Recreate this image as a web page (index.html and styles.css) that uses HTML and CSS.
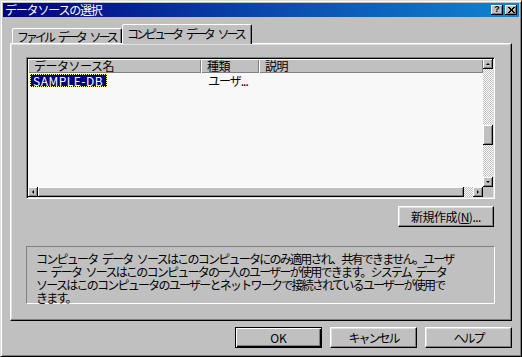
FILE: index.html
```html
<!DOCTYPE html>
<html lang="ja">
<head>
    <meta charset="UTF-8">
    <meta name="viewport" content="width=device-width, initial-scale=1.0">
    <title>データソースの選択</title>
    <link rel="stylesheet" href="styles.css">
</head>
<body>
    <div class="window">
        <div class="titlebar">
            <span class="title">データソースの選択</span>
            <div class="title-buttons">
                <div class="cap-btn help">?</div>
                <div class="cap-btn">
                    <svg viewBox="0 0 7 6" width="7" height="6" shape-rendering="crispEdges">
                        <path d="M0 0h2v1h-2zM5 0h2v1h-2zM1 1h2v1h-2zM4 1h2v1h-2zM2 2h3v2h-3zM1 4h2v1h-2zM4 4h2v1h-2zM0 5h2v1h-2zM5 5h2v1h-2z" fill="#000"/>
                    </svg>
                </div>
            </div>
        </div>

        <div class="tabs">
            <div class="tab">ファイル データ ソース</div>
            <div class="tab active">コンピュータ データ ソース</div>
        </div>

        <div class="panel">
            <div class="listview">
                <div class="list-body">
                    <div class="list-header">
                        <div class="col col-name">データソース名</div>
                        <div class="col col-type">種類</div>
                        <div class="col col-desc">説明</div>
                    </div>
                    <div class="list-row">
                        <div class="cell col-name"><span class="selected">SAMPLE-DB</span></div>
                        <div class="cell col-type">ユーザ...</div>
                    </div>
                </div>
                <div class="vscroll">
                    <div class="sb-btn"><span class="arrow up"></span></div>
                    <div class="sb-track"><div class="sb-thumb v"></div></div>
                    <div class="sb-btn"><span class="arrow down"></span></div>
                </div>
                <div class="hscroll">
                    <div class="sb-btn"><span class="arrow left"></span></div>
                    <div class="sb-thumb h"></div>
                    <div class="sb-track"></div>
                    <div class="sb-btn"><span class="arrow right"></span></div>
                </div>
                <div class="sb-corner"></div>
            </div>

            <div class="new-row">
                <div class="btn new-btn">新規作成(<u>N</u>)...</div>
            </div>

            <div class="desc">
                コンピュータ&ensp;データ&ensp;ソースはこのコンピュータにのみ適用され、共有できません。ユーザ<br>
                ー&ensp;データ&ensp;ソースはこのコンピュータの一人のユーザーが使用できます。システム&ensp;データ<br>
                ソースはこのコンピュータのユーザーとネットワークで接続されているユーザーが使用で<br>
                きます。
            </div>
        </div>

        <div class="footer">
            <div class="btn default">OK</div>
            <div class="btn kana">キャンセル</div>
            <div class="btn kana">ヘルプ</div>
        </div>
    </div>
</body>
</html>
```

FILE: styles.css
```css
* {
    margin: 0;
    padding: 0;
    box-sizing: border-box;
}

body {
    font-family: "Noto Sans CJK JP", "Noto Sans", sans-serif;
    font-size: 12px;
    color: #000;
    background: #c0c0c0;
    overflow: hidden;
}

.window {
    width: 522px;
    height: 357px;
    background: #c0c0c0;
    border: 1px solid;
    border-color: #dfdfdf #000 #000 #dfdfdf;
    box-shadow: inset 1px 1px #fff, inset -1px -1px #808080;
    padding: 2px;
    display: flex;
    flex-direction: column;
}

/* caption */
.titlebar {
    height: 14px;
    background: linear-gradient(90deg, #000080 0%, #0a4eb0 55%, #1084d0 100%);
    display: flex;
    align-items: center;
    justify-content: space-between;
    padding: 0 2px;
}

.title {
    color: #fff;
    line-height: 14px;
    letter-spacing: -1.2px;
}

.title-buttons {
    display: flex;
    gap: 2px;
}

.cap-btn {
    width: 12px;
    height: 10px;
    background: #c0c0c0;
    box-shadow: inset -1px -1px #000, inset 1px 1px #fff, inset -2px -2px #808080;
    display: flex;
    align-items: center;
    justify-content: center;
    padding-bottom: 1px;
}

.cap-btn.help {
    font-family: "Liberation Sans", sans-serif;
    font-weight: bold;
    font-size: 9px;
    line-height: 9px;
}

/* tabs */
.tabs {
    height: 26px;
    display: flex;
    align-items: flex-end;
    padding-left: 9px;
}

.tab {
    width: 110px;
    height: 15px;
    border: 1px solid;
    border-bottom: none;
    border-color: #fff #000 transparent #fff;
    border-radius: 2px 2px 0 0;
    box-shadow: inset -1px 0 #808080;
    padding: 1px 0 0 4px;
    line-height: 13px;
    letter-spacing: -3px;
    word-spacing: 5px;
    white-space: nowrap;
}

.tab.active {
    width: 130px;
    height: 20px;
    margin-bottom: -1px;
    padding-top: 2px;
    background: #c0c0c0;
    position: relative;
    z-index: 1;
}

/* page */
.panel {
    height: 278px;
    margin: 0 7px;
    border: 1px solid;
    border-color: #fff #000 #000 #fff;
    box-shadow: inset -1px -1px #808080, inset 1px 1px #dfdfdf;
    padding: 13px 0 0 15px;
    display: flex;
    flex-direction: column;
}

.listview {
    width: 469px;
    height: 142px;
    border: 1px solid;
    border-color: #808080 #fff #fff #808080;
    box-shadow: inset 1px 1px #000, inset -1px -1px #dfdfdf;
    padding: 1px;
    background: #f8f8f8;
    display: grid;
    grid-template-columns: 1fr 10px;
    grid-template-rows: 1fr 10px;
}

.list-header {
    display: flex;
    height: 14px;
    background: #c0c0c0;
}

.col {
    padding-left: 6px;
    line-height: 14px;
    letter-spacing: -0.5px;
    box-shadow: inset 1px 1px #fff, inset -1px -1px #808080;
    white-space: nowrap;
}

.col-name {
    width: 173px;
}

.col-type {
    width: 58px;
}

.col-desc {
    flex: 1;
}

.list-row {
    display: flex;
    height: 13px;
    margin-top: 1px;
}

.cell {
    line-height: 11px;
}

.cell.col-name {
    padding-left: 2px;
}

.cell.col-type {
    padding-left: 7px;
    line-height: 13px;
    letter-spacing: -1px;
}

.selected {
    display: inline-block;
    height: 13px;
    background: #000080;
    color: #fff;
    border: 1px dotted #ffff80;
    padding: 0 3px 0 2px;
    letter-spacing: 0.5px;
}

/* scrollbars */
.vscroll {
    display: flex;
    flex-direction: column;
}

.hscroll {
    display: flex;
}

.sb-btn {
    flex: 0 0 10px;
    height: 10px;
    background: #c0c0c0;
    box-shadow: inset -1px -1px #000, inset 1px 1px #fff, inset -2px -2px #808080;
    display: flex;
    align-items: center;
    justify-content: center;
    padding: 0 1px 1px 0;
}

.sb-track {
    flex: 1;
    background: repeating-conic-gradient(#fff 0 25%, #c0c0c0 0 50%) 0 0 / 2px 2px;
}

.sb-thumb {
    background: #c0c0c0;
    box-shadow: inset -1px -1px #000, inset 1px 1px #fff, inset -2px -2px #808080;
}

.sb-thumb.v {
    height: 20px;
    margin-top: 56px;
}

.sb-thumb.h {
    width: 426px;
}

.sb-corner {
    background: #c0c0c0;
}

.arrow {
    width: 0;
    height: 0;
    border: 2px solid transparent;
}

.arrow.up {
    border-top: none;
    border-bottom-color: #000;
}

.arrow.down {
    border-bottom: none;
    border-top-color: #000;
}

.arrow.left {
    border-left: none;
    border-right-color: #000;
}

.arrow.right {
    border-right: none;
    border-left-color: #000;
}

/* buttons */
.btn {
    height: 21px;
    background: #c0c0c0;
    border: 1px solid;
    border-color: #fff #000 #000 #fff;
    box-shadow: inset -1px -1px #808080, inset 1px 1px #dfdfdf;
    display: flex;
    align-items: center;
    justify-content: center;
    line-height: 13px;
    padding-bottom: 1px;
}

.btn u {
    text-decoration-thickness: 1px;
    text-underline-offset: 1px;
}

.new-row {
    width: 469px;
    display: flex;
    justify-content: flex-end;
    margin-top: 7px;
}

.new-btn {
    width: 96px;
    margin-right: 1px;
    letter-spacing: -0.5px;
}

.desc {
    margin-top: 19px;
    width: 469px;
    height: 58px;
    border: 1px solid;
    border-color: #808080 #fff #fff #808080;
    padding: 5px 6px 0 9px;
    line-height: 13px;
    letter-spacing: -1.75px;
    white-space: nowrap;
}

.footer {
    display: flex;
    justify-content: flex-end;
    gap: 8px;
    margin-top: 6px;
    padding-right: 7px;
}

.footer .btn {
    width: 87px;
}

.btn.default {
    border-color: #000;
    box-shadow: inset 1px 1px #fff, inset -1px -1px #000, inset -2px -2px #808080;
}

.btn.kana {
    letter-spacing: -2px;
}
```
